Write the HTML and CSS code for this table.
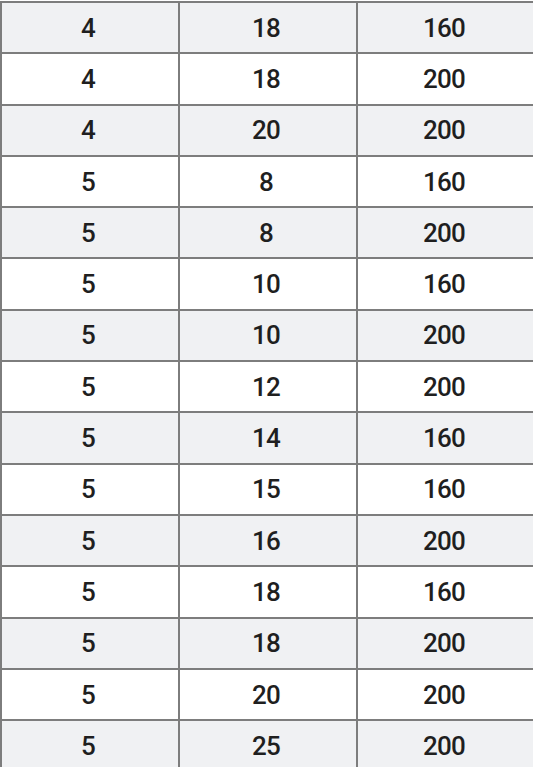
FILE: index.html
```html
<!DOCTYPE html>
<html lang="en">
<head>
<meta charset="utf-8">
<title>Table</title>
<link rel="stylesheet" href="styles.css">
</head>
<body>
<div class="grid">
  <div class="cell odd">4</div><div class="cell odd">18</div><div class="cell odd">160</div>
  <div class="cell">4</div><div class="cell">18</div><div class="cell">200</div>
  <div class="cell odd">4</div><div class="cell odd">20</div><div class="cell odd">200</div>
  <div class="cell">5</div><div class="cell">8</div><div class="cell">160</div>
  <div class="cell odd">5</div><div class="cell odd">8</div><div class="cell odd">200</div>
  <div class="cell">5</div><div class="cell">10</div><div class="cell">160</div>
  <div class="cell odd">5</div><div class="cell odd">10</div><div class="cell odd">200</div>
  <div class="cell">5</div><div class="cell">12</div><div class="cell">200</div>
  <div class="cell odd">5</div><div class="cell odd">14</div><div class="cell odd">160</div>
  <div class="cell">5</div><div class="cell">15</div><div class="cell">160</div>
  <div class="cell odd">5</div><div class="cell odd">16</div><div class="cell odd">200</div>
  <div class="cell">5</div><div class="cell">18</div><div class="cell">160</div>
  <div class="cell odd">5</div><div class="cell odd">18</div><div class="cell odd">200</div>
  <div class="cell">5</div><div class="cell">20</div><div class="cell">200</div>
  <div class="cell odd">5</div><div class="cell odd">25</div><div class="cell odd">200</div>
</div>
</body>
</html>
```

FILE: styles.css
```css
html, body {
  margin: 0;
  padding: 0;
  background: #ffffff;
  overflow: hidden;
}
.grid {
  margin-top: 1px;
  display: grid;
  grid-template-columns: 178px 178px 178px;
  grid-auto-rows: 51.3px;
  font-family: Roboto, "Liberation Sans", sans-serif;
  font-weight: 500;
  font-size: 26px;
  letter-spacing: -0.8px;
  color: #1f1f1f;
}
.cell {
  box-sizing: border-box;
  border-left: 2px solid #7d7d7d;
  border-top: 2px solid #7d7d7d;
  padding-right: 4px;
  display: flex;
  align-items: center;
  justify-content: center;
  background: #ffffff;
}
.cell.odd {
  background: #f0f1f3;
}
```
